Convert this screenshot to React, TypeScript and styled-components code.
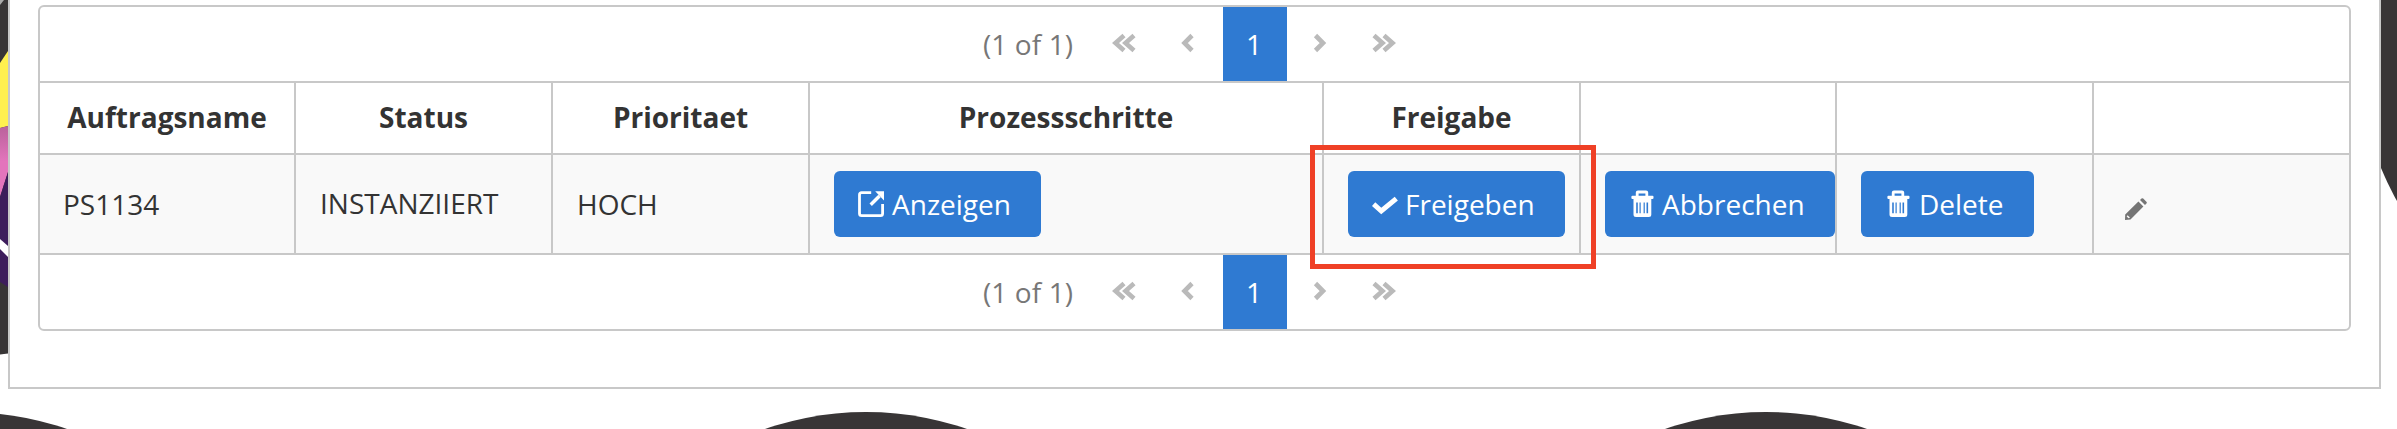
import React from "react";
import styled, { createGlobalStyle } from "styled-components";

const LINE = "#c8c8c8";
const BLUE = "#2f7ad2";

const GlobalStyle = createGlobalStyle`
  * { box-sizing: border-box; }
  body {
    margin: 0;
    background: #fff;
    color: #333;
    font-family: "Open Sans", "Liberation Sans", sans-serif;
    font-size: 28px;
    line-height: 38px;
    overflow: hidden;
  }
`;

const Page = styled.div`
  display: grid;
  width: 2397px;
  height: 429px;
  overflow: hidden;
  & > * { grid-area: 1 / 1; }
`;

const Backdrop = styled.svg`
  display: block;
`;

const Panel = styled.main`
  z-index: 1;
  width: 2373px;
  height: 389px;
  margin-left: 8px;
  padding: 5px 28px 0;
  background: #fff;
  border: solid ${LINE};
  border-width: 0 2px 2px;
`;

const DataTable = styled.section`
  height: 326px;
  border: 2px solid ${LINE};
  border-radius: 6px;
`;

const Paginator = styled.nav<{ $bottom?: boolean }>`
  display: flex;
  height: ${(p) => (p.$bottom ? 74 : 76)}px;
  padding-left: 943px;
  border-bottom: ${(p) => (p.$bottom ? "none" : `2px solid ${LINE}`)};
`;

const PageInfo = styled.span`
  width: 112px;
  padding-top: 18px;
  color: #777;
  letter-spacing: 0.1px;
  white-space: nowrap;
`;

const PageArrow = styled.svg`
  display: block;
  width: 64px;
  height: 74px;
  fill: none;
  stroke: #bababa;
  stroke-width: 4.6;
`;

const CurrentPage = styled.span`
  width: 64px;
  height: 74px;
  padding: 18px 2px 0 0;
  color: #fff;
  background: ${BLUE};
  text-align: center;
`;

const Row = styled.div<{ $header?: boolean }>`
  display: grid;
  grid-template-columns: 256px 257px 257px 514px 257px 256px 257px 255px;
  height: ${(p) => (p.$header ? 72 : 100)}px;
  background: ${(p) => (p.$header ? "#fff" : "#f9f9f9")};
  border-bottom: 2px solid ${LINE};
`;

const HeaderCell = styled.div`
  padding-top: 15px;
  border-right: 2px solid ${LINE};
  font-weight: 700;
  text-align: center;
  &:last-child { border-right: none; }
`;

const Cell = styled.div<{ $raised?: boolean }>`
  position: relative;
  display: flex;
  align-items: center;
  padding: 0 0 ${(p) => (p.$raised ? 2 : 0)}px 24px;
  border-right: 2px solid ${LINE};
  &:first-child { padding-left: 23px; }
  &:last-child { border-right: none; }
`;

const Button = styled.button<{ $width: number; $gap?: number }>`
  display: flex;
  flex: none;
  align-items: center;
  gap: ${(p) => p.$gap ?? 6}px;
  width: ${(p) => p.$width}px;
  height: 66px;
  padding: 0 0 0 24px;
  color: #fff;
  background: ${BLUE};
  border: none;
  border-radius: 6px;
  font: inherit;
  white-space: nowrap;
`;

const Icon = styled.svg`
  flex: none;
  display: block;
  width: 28px;
  height: 28px;
`;

const PencilIcon = styled.svg`
  display: block;
  width: 22px;
  height: 22px;
  margin: 10px 0 0 7px;
  fill: #757575;
`;

const Highlight = styled.div`
  position: absolute;
  left: -14px;
  top: -10px;
  width: 286px;
  height: 124px;
  border: 5px solid #ef4026;
  z-index: 2;
`;

const ARROWS = {
  first: ["M29 28.5 20.5 36 29 43.5", "M39 28.5 30.5 36 39 43.5"],
  prev: ["M33 28.5 25.5 36 33 43.5"],
  next: ["M28.5 28.5 36 36 28.5 43.5"],
  last: ["M23 28.5 31.5 36 23 43.5", "M33 28.5 41.5 36 33 43.5"],
};

function Arrow({ kind }: { kind: keyof typeof ARROWS }) {
  return (
    <PageArrow viewBox="0 0 64 74">
      {ARROWS[kind].map((d) => (
        <path key={d} d={d} />
      ))}
    </PageArrow>
  );
}

function Pager({ bottom }: { bottom?: boolean }) {
  return (
    <Paginator $bottom={bottom}>
      <PageInfo>(1 of 1)</PageInfo>
      <Arrow kind="first" />
      <Arrow kind="prev" />
      <CurrentPage>1</CurrentPage>
      <Arrow kind="next" />
      <Arrow kind="last" />
    </Paginator>
  );
}

const TrashIcon = () => (
  <Icon viewBox="0 0 28 28" fill="#fff">
    <path
      fillRule="evenodd"
      d="M9 .4h8a2.2 2.2 0 0 1 2.2 2.2v3.2h4.3a1 1 0 0 1 1 1v1.3a1 1 0 0 1-1 1h-1.2v15.4a2.5 2.5 0 0 1-2.5 2.5H7a2.5 2.5 0 0 1-2.5-2.5V9.1H3.4a1 1 0 0 1-1-1V6.8a1 1 0 0 1 1-1h3.4V2.6A2.2 2.2 0 0 1 9 .4zM9.6 3.5v2.3h6.8V3.5zM7.2 12.4v10.8h1.6V12.4zM10.5 12.4v10.8h1.2V12.4zM14.6 12.4v10.8h1.2V12.4zM17.5 12.4v10.8h1.6V12.4z"
    />
  </Icon>
);

const CheckIcon = () => (
  <Icon viewBox="0 0 28 28" fill="none" stroke="#fff" strokeWidth="5">
    <path d="M1.6 14.2 9.3 21 24.3 8.6" />
  </Icon>
);

const ExternalIcon = () => (
  <Icon viewBox="0 0 28 28" fill="none" stroke="#fff">
    <path
      d="M13.2 2.6H3.6Q1.5 2.6 1.5 4.7V23.5Q1.5 25.6 3.6 25.6H22.6Q24.6 25.6 24.6 23.5V14"
      strokeWidth="2.8"
    />
    <path d="M12.7 14.8 21.5 6" strokeWidth="3.4" />
    <path d="M17.2 1.3H26V10.4z" fill="#fff" stroke="none" />
  </Icon>
);

const HEADERS = ["Auftragsname", "Status", "Prioritaet", "Prozessschritte", "Freigabe", "", "", ""];

export default function App() {
  return (
    <Page>
      <GlobalStyle />
      <Backdrop width="2397" height="429" viewBox="0 0 2397 429">
        <defs>
          <linearGradient id="pink" x1="0" y1="0" x2="0" y2="1">
            <stop offset="0" stopColor="#b9629b" />
            <stop offset=".5" stopColor="#e375bc" />
          </linearGradient>
        </defs>
        <g fill="#383536">
          <circle cx="-34" cy="48" r="308.5" />
          <circle cx="2666" cy="50" r="308.5" />
          <circle cx="-34" cy="720.5" r="308.5" />
          <circle cx="866" cy="720.5" r="308.5" />
          <circle cx="1766" cy="720.5" r="308.5" />
        </g>
        <path d="M0 0H4L0 5z" fill="#aaa" />
        <path d="M0 63 8 51V126L0 128z" fill="#fff04f" />
        <path d="M0 128 8 126V172L0 197z" fill="url(#pink)" />
        <path d="M0 197 8 172V287L0 282z" fill="#3d1d5c" />
        <path d="M0 239 8 246V257L0 249z" fill="#fff" />
      </Backdrop>
      <Panel>
        <DataTable>
          <Pager />
          <Row $header>
            {HEADERS.map((label, i) => (
              <HeaderCell key={i}>{label}</HeaderCell>
            ))}
          </Row>
          <Row>
            <Cell>PS1134</Cell>
            <Cell $raised>INSTANZIIERT</Cell>
            <Cell>HOCH</Cell>
            <Cell>
              <Button $width={207}>
                <ExternalIcon />
                Anzeigen
              </Button>
            </Cell>
            <Cell>
              <Button $width={217} $gap={5}>
                <CheckIcon />
                Freigeben
              </Button>
              <Highlight />
            </Cell>
            <Cell>
              <Button $width={230} $gap={5}>
                <TrashIcon />
                Abbrechen
              </Button>
            </Cell>
            <Cell>
              <Button $width={173}>
                <TrashIcon />
                Delete
              </Button>
            </Cell>
            <Cell>
              <PencilIcon viewBox="0 0 22 22">
                <path d="M13.4 3.6 18.4 8.6 6 21 5.5 21.5 0 22 .2 16.5zM15 2 16.5.6Q17.3-.2 18.2.6L21.4 3.8Q22.3 4.7 21.4 5.5L20 7z" />
                <path d="M2.5 17.2 5 19.6 3.6 20.3 1.7 18.5z" fill="#f9f9f9" />
              </PencilIcon>
            </Cell>
          </Row>
          <Pager bottom />
        </DataTable>
      </Panel>
    </Page>
  );
}
